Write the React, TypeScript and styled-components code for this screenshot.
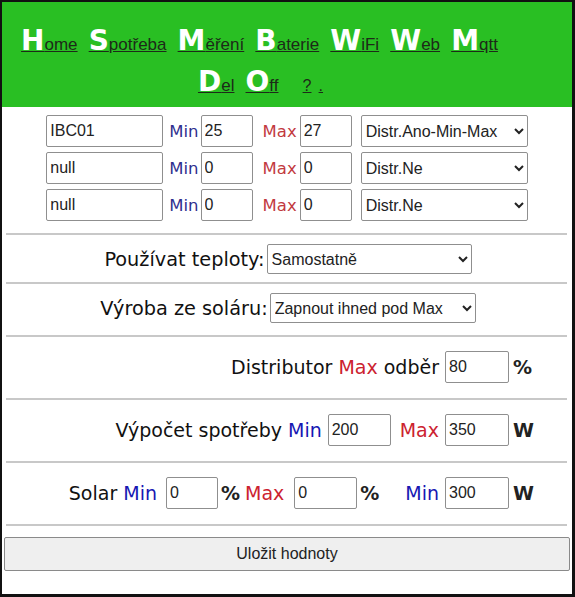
import { Fragment } from "react";
import styled, { createGlobalStyle } from "styled-components";

const GlobalStyle = createGlobalStyle`
    html, body {
        margin: 0;
        padding: 0;
        background: #fff;
    }
`;

const links = [
    { big: "H", rest: "ome" },
    { big: "S", rest: "potřeba" },
    { big: "M", rest: "ěření" },
    { big: "B", rest: "aterie" },
    { big: "W", rest: "iFi" },
    { big: "W", rest: "eb" },
    { big: "M", rest: "qtt", brk: true },
    { big: "D", rest: "el" },
    { big: "O", rest: "ff" },
];

const sensors = [
    { name: "IBC01", min: "25", max: "27", mode: "Distr.Ano-Min-Max" },
    { name: "null", min: "0", max: "0", mode: "Distr.Ne" },
    { name: "null", min: "0", max: "0", mode: "Distr.Ne" },
];

const App = () => {
    return (
        <Frame>
            <GlobalStyle />
            <Header>
                {links.map((l, i) => (
                    <Fragment key={i}>
                        <NavLink href="#">
                            <Big>{l.big}</Big>
                            {l.rest}
                        </NavLink>
                        {l.brk ? <br /> : " "}
                    </Fragment>
                ))}
                <NavLink href="#" className="small first">?</NavLink>{" "}
                <NavLink href="#" className="small">.</NavLink>
            </Header>

            <Sensors>
                {sensors.map((s, i) => (
                    <SensorRow key={i}>
                        <Input defaultValue={s.name} $w={117} />
                        <SmallLabel $tone="min">Min</SmallLabel>
                        <Input defaultValue={s.min} $w={52} />
                        <SmallLabel $tone="max" className="max">Max</SmallLabel>
                        <Input defaultValue={s.max} $w={52} />
                        <Select defaultValue={s.mode} $w={167} className="mode">
                            <option>Distr.Ano-Min-Max</option>
                            <option>Distr.Ne</option>
                        </Select>
                    </SensorRow>
                ))}
            </Sensors>

            <Rule />
            <CenterRow $pb={8}>
                <Label className="plain">Používat teploty:</Label>
                <Select defaultValue="Samostatně" $w={205}>
                    <option>Samostatně</option>
                    <option>Společně</option>
                </Select>
            </CenterRow>

            <Rule />
            <CenterRow $pb={12}>
                <Label className="plain">Výroba ze soláru:</Label>
                <Select defaultValue="Zapnout ihned pod Max" $w={206}>
                    <option>Zapnout ihned pod Max</option>
                    <option>Vypnuto</option>
                </Select>
            </CenterRow>

            <Rule />
            <RightRow>
                <Label>
                    Distributor <Tone $tone="max">Max</Tone> odběr
                </Label>
                <Input defaultValue="80" $w={64} />
                <Unit>%</Unit>
            </RightRow>

            <Rule />
            <RightRow>
                <Label>
                    Výpočet spotřeby <Tone $tone="min">Min</Tone>
                </Label>
                <Input defaultValue="200" $w={63} />
                <Label className="gap">
                    <Tone $tone="max">Max</Tone>
                </Label>
                <Input defaultValue="350" $w={64} />
                <Unit>W</Unit>
            </RightRow>

            <Rule />
            <RightRow>
                <Label className="solar">
                    Solar <Tone $tone="min">Min</Tone>
                </Label>
                <Input defaultValue="0" $w={52} />
                <Unit className="inline">%</Unit>
                <Label className="loose">
                    <Tone $tone="max">Max</Tone>
                </Label>
                <Input defaultValue="0" $w={63} />
                <Unit className="inline">%</Unit>
                <Label className="wide">
                    <Tone $tone="min">Min</Tone>
                </Label>
                <Input defaultValue="300" $w={64} />
                <Unit>W</Unit>
            </RightRow>

            <Rule />
            <SaveButton>Uložit hodnoty</SaveButton>
        </Frame>
    );
};

const Frame = styled.div`
    width: 575px;
    height: 597px;
    box-sizing: border-box;
    border: 2px solid #111;
    border-right-width: 3px;
    border-bottom-width: 3px;
    background: #fff;
    overflow: hidden;
    display: flex;
    flex-direction: column;
    font-family: "DejaVu Sans", Verdana, sans-serif;
    color: #111;
`;

const Header = styled.nav`
    background: #29bf23;
    height: 105px;
    flex-shrink: 0;
    box-sizing: border-box;
    padding: 20px 55px 0 0;
    text-align: center;
    line-height: 37px;
`;

const NavLink = styled.a`
    color: #1d2a18;
    text-decoration: underline;
    font-family: "Liberation Sans", Arial, sans-serif;
    font-size: 17px;
    margin: 0 3px;
    white-space: nowrap;
    &.small {
        font-size: 16px;
        margin: 0 1px;
    }
    &.first {
        margin-left: 16px;
    }
`;

const Big = styled.b`
    color: #fff;
    font-family: "DejaVu Sans", Verdana, sans-serif;
    font-weight: bold;
    font-size: 28px;
`;

const Sensors = styled.div`
    flex-shrink: 0;
    padding: 8px 0 12px;
    display: flex;
    flex-direction: column;
    gap: 5px;
`;

const SensorRow = styled.div`
    display: flex;
    align-items: center;
    justify-content: center;
    .mode {
        margin-left: 9px;
        height: 32px;
    }
`;

const SmallLabel = styled.span<{ $tone: "min" | "max" }>`
    font-size: 16.5px;
    color: ${(p) => (p.$tone === "min" ? "#30308f" : "#c23a3f")};
    margin: 0 2px 0 6px;
    &.max {
        margin: 0 3px 0 10px;
    }
`;

const Input = styled.input<{ $w: number }>`
    box-sizing: border-box;
    width: ${(p) => p.$w}px;
    height: 32px;
    border: 1px solid #8f8f8f;
    border-radius: 2px;
    padding: 0 3px;
    font-family: "Liberation Sans", Arial, sans-serif;
    font-size: 16px;
    color: #222;
    background: #fff;
    outline: none;
`;

const Select = styled.select<{ $w: number }>`
    box-sizing: border-box;
    width: ${(p) => p.$w}px;
    height: 30px;
    border: 1px solid #8f8f8f;
    border-radius: 2px;
    font-family: "Liberation Sans", Arial, sans-serif;
    font-size: 16px;
    color: #222;
    background: #fff;
`;

const Rule = styled.div`
    height: 0;
    flex-shrink: 0;
    border-top: 2px solid #c8c8c8;
    margin: 0 5px 0 4px;
`;

const CenterRow = styled.div<{ $pb: number }>`
    flex-shrink: 0;
    display: flex;
    align-items: center;
    justify-content: center;
    gap: 2px;
    padding: 9px 0 ${(p) => p.$pb}px 2px;
`;

const RightRow = styled.div`
    flex-shrink: 0;
    display: flex;
    align-items: center;
    justify-content: flex-end;
    padding: 14px 35px 15px 0;
`;

const Label = styled.span`
    font-size: 19px;
    margin-right: 6px;
    white-space: nowrap;
    &.plain {
        margin-right: 0;
        font-size: 19.3px;
    }
    &.gap {
        margin-left: 9px;
    }
    &.solar {
        margin-right: 9px;
    }
    &.loose {
        margin-right: 10px;
    }
    &.wide {
        margin-left: 21px;
    }
`;

const Tone = styled.span<{ $tone: "min" | "max" }>`
    color: ${(p) => (p.$tone === "min" ? "#1717b3" : "#cc2230")};
`;

const Unit = styled.span`
    font-size: 19px;
    font-weight: bold;
    color: #222;
    width: 24px;
    margin-left: 4px;
    &.inline {
        width: 20px;
        margin: 0 4px 0 3px;
    }
`;

const SaveButton = styled.button`
    flex-shrink: 0;
    margin: 11px 2px 0 2px;
    height: 34px;
    border: 1px solid #8a8a8a;
    border-radius: 2px;
    background: #efefef;
    font-family: "Liberation Sans", Arial, sans-serif;
    font-size: 16px;
    color: #222;
`;

export default App;
